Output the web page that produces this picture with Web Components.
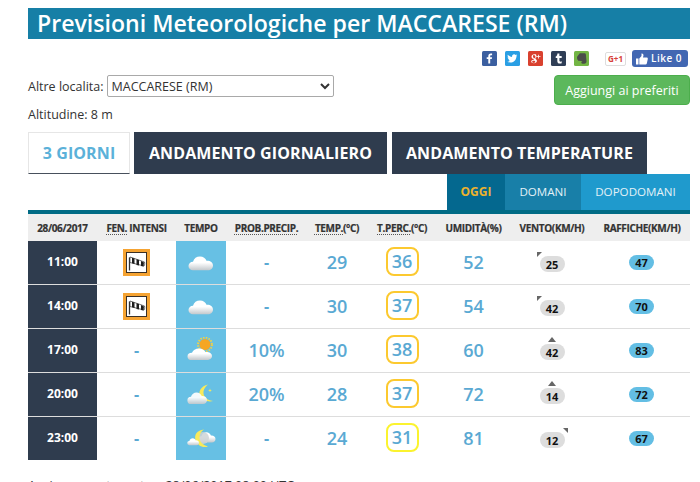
<!DOCTYPE html>
<html lang="it">
<head>
<meta charset="utf-8">
<title>Previsioni Meteorologiche</title>
<style>
html, body { margin: 0; background: #fff; overflow: hidden; }
body { font: 13px "Open Sans", "Liberation Sans", sans-serif; color: #333; }
</style>
</head>
<body>
<meteo-page>
  <meteo-title slot="title">Previsioni Meteorologiche per MACCARESE (RM)</meteo-title>
  <social-bar slot="social"></social-bar>
  <place-form slot="form"></place-form>
  <main-tabs slot="tabs"></main-tabs>
  <day-tabs slot="days"></day-tabs>
  <forecast-table slot="table"></forecast-table>
  <span slot="footer">Aggiornamento meteo: 28/06/2017 08:00 UTC</span>
</meteo-page>

<script>
class MeteoPage extends HTMLElement {
  constructor() {
    super()
    this.attachShadow({ mode: 'open' }).innerHTML = `
<style>
:host { display: block; padding: 8px 10px 0 28px; }
.footer { margin-top: 16px; font-size: 12.5px; line-height: 19px; color: #333; }
</style>
<slot name="title"></slot>
<slot name="social"></slot>
<slot name="form"></slot>
<slot name="tabs"></slot>
<slot name="days"></slot>
<slot name="table"></slot>
<div class="footer"><slot name="footer"></slot></div>`
  }
}

class MeteoTitle extends HTMLElement {
  constructor() {
    super()
    this.attachShadow({ mode: 'open' }).innerHTML = `
<style>
:host { display: block; height: 31px; padding-left: 9px; background: #167fa6; color: #fff;
  font: 600 23.1px/30px "Open Sans", sans-serif; white-space: nowrap; }
</style>
<slot></slot>`
  }
}

class SocialBar extends HTMLElement {
  constructor() {
    super()
    this.attachShadow({ mode: 'open' }).innerHTML = `
<style>
:host { display: flex; align-items: center; justify-content: flex-end; height: 17px;
  margin-top: 11px; padding-right: 2px; }
svg { display: block; width: 15px; height: 15px; margin-right: 8px; }
svg.last { margin-right: 16px; }
.gplus { width: 21px; height: 14px; box-sizing: border-box; border: 1px solid #ddd; border-radius: 2px;
  margin-right: 6px; color: #d8413a; font: 700 8px/12px "Open Sans", sans-serif; text-align: center; }
.like { display: flex; align-items: center; gap: 3px; width: 56px; height: 17px; box-sizing: border-box;
  padding-left: 4px; background: #4267b2; border-radius: 3px; color: #fff;
  font: 600 10px/17px "Open Sans", sans-serif; letter-spacing: .5px; }
.like svg { width: 12px; height: 12px; margin: 0; }
</style>
<svg viewBox="0 0 15 15"><rect width="15" height="15" rx="1.5" fill="#3b5fa0"/><path d="M8.2 12.5V8h1.6l.3-1.8H8.2V5.1c0-.6.2-.9.9-.9h1V2.6C9.7 2.5 9.300 2.500 8.800 2.500c-1.500 0-2.500.9-2.500 2.400v1.300H4.700V8h1.600v4.500z" fill="#fff"/></svg>
<svg viewBox="0 0 15 15"><rect width="15" height="15" rx="1.500" fill="#2a9fe4"/><path d="M12.300 4.400c-.4.2-.8.3-1.200.3.400-.3.800-.7.900-1.200-.4.200-.9.400-1.300.5a2.100 2.100 0 0 0-3.600 1.900C5.400 5.800 3.900 5 2.900 3.700c-.6 1-.3 2.200.6 2.800-.3 0-.6-.1-.9-.2 0 1 .7 1.900 1.700 2.100-.3.100-.6.100-.9 0 .3.800 1 1.400 1.900 1.400-.9.700-2 1-3.100.9 3.100 2 8.900.9 9.300-5.400.3-.2.600-.5.800-.9z" fill="#fff"/></svg>
<svg viewBox="0 0 15 15"><rect width="15" height="15" rx="1.500" fill="#d9412f"/><path d="M6.300 3.200H8.500l-.7.500c.5.400.8.900.8 1.500 0 1.300-1.200 1.700-1.200 2.300 0 .6 1.500 1 1.500 2.500 0 1.200-1.100 2.200-3 2.200-1.500 0-2.700-.6-2.700-1.700s1.200-1.800 2.700-1.800c-.3-.3-.3-.6-.2-.9C4.500 7.900 3.500 7 3.500 5.700c0-1.400 1.200-2.500 2.800-2.500zm-.3.700c-.8 0-1.100.7-1 1.600.1.900.7 1.700 1.400 1.700s1.100-.6 1-1.500c-.1-1-.7-1.800-1.400-1.800zm-.2 5.800c-1 0-1.700.5-1.700 1.100 0 .7.700 1.100 1.600 1.100 1 0 1.600-.4 1.600-1.100 0-.6-.6-1-1.500-1.100zM11 3.800v1.500h1.500v.8H11v1.500h-.8V6.100H8.700v-.8h1.500V3.800z" fill="#fff"/></svg>
<svg viewBox="0 0 15 15"><rect width="15" height="15" rx="1.500" fill="#2f3e56"/><path d="M6.400 2.500h2v2.600h2.300v2H8.400v2.500c0 .8.400 1.100 1 1.100.4 0 .8-.1 1.300-.4v1.900c-.6.300-1.200.4-1.900.4-1.600 0-2.500-1-2.500-2.600V7.100H4.700V5.500c1-.3 1.600-1.300 1.700-3z" fill="#fff"/></svg>
<svg class="last" viewBox="0 0 15 15"><rect width="15" height="15" rx="1.500" fill="#73b544"/><path d="M4 4.500 5.800 2.200h4.600c.8 0 1.400.5 1.500 1.300l.6 6.500c.1 1.700-.8 2.800-2.300 2.800H8.500c-.8 0-1.200-.5-1.200-1.200 0-.9.800-1.200 1.500-1.200l-3-.6C4.500 10.200 3 9 3 6.500c0-.8.300-1.500 1-2z" fill="#4a4d48"/></svg>
<div class="gplus">G+1</div>
<div class="like"><svg viewBox="0 0 12 12"><path d="M0 5.500h2.500V11.500H0zM3.300 5.500 5.500 3V.5c1.200-.3 2 .7 2 1.800L7 4.500h3.600c.9 0 1.400.7 1.200 1.500l-1 4.500c-.2.700-.6 1-1.300 1H3.300z" fill="#fff"/></svg><span>Like 0</span></div>`
  }
}

class PlaceForm extends HTMLElement {
  constructor() {
    super()
    this.attachShadow({ mode: 'open' }).innerHTML = `
<style>
:host { display: flex; justify-content: space-between; align-items: flex-start; height: 57px;
  margin-top: 8px; font: 12.5px "Open Sans", sans-serif; color: #333; }
.line { display: flex; align-items: center; gap: 3px; height: 22px; }
select { width: 227px; height: 22px; margin: 0; padding: 0; box-sizing: border-box; background: #fff;
  border: 1px solid #a9a9a9; border-radius: 2px; font: 12.5px "Open Sans", sans-serif; color: #333; }
.alt { margin-top: 9px; line-height: 18px; }
button { width: 136px; height: 30px; padding: 0; border: 1px solid #4cae4c; border-radius: 4px;
  background: #5cb85c; color: #fff; font: 12.5px "Open Sans", sans-serif; }
</style>
<div>
  <div class="line"><label>Altre localita:</label><select><option>MACCARESE (RM)</option></select></div>
  <div class="alt">Altitudine: 8 m</div>
</div>
<button>Aggiungi ai preferiti</button>`
  }
}

class MainTabs extends HTMLElement {
  constructor() {
    super()
    this.attachShadow({ mode: 'open' }).innerHTML = `
<style>
:host { display: flex; gap: 4px; height: 42px; font: 700 16px/42px "Open Sans", sans-serif; white-space: nowrap;
  letter-spacing: .1px; }
div { background: #2f3c4e; color: #fff; text-align: center; }
.t2 { width: 253px; }
.t3 { width: 255px; margin-left: 1px; }
.on { width: 102px; box-sizing: border-box; line-height: 40px; background: #fff; color: #5bb1d9;
  border: 1px solid #e6e6e6; border-bottom: 1px solid #47505c; }
</style>
<div class="on">3 GIORNI</div>
<div class="t2">ANDAMENTO GIORNALIERO</div>
<div class="t3">ANDAMENTO TEMPERATURE</div>`
  }
}

class DayTabs extends HTMLElement {
  constructor() {
    super()
    this.attachShadow({ mode: 'open' }).innerHTML = `
<style>
:host { display: flex; justify-content: flex-end; height: 36px; font: 11.6px/36px "Open Sans", sans-serif;
  color: #e3f1f7; text-align: center; }
.oggi { width: 58px; background: #04688f; color: #ecb22e; font-weight: 700; font-size: 12px; }
.dom { width: 76px; background: #187fa8; }
.dop { width: 109px; background: #1f9acd; }
</style>
<div class="oggi">OGGI</div><div class="dom">DOMANI</div><div class="dop">DOPODOMANI</div>`
  }
}

// icone meteo, disegnate sullo sfondo azzurro della colonna TEMPO
const cloud = (x, y, sx, sy = sx) => `<g transform="translate(${x} ${y}) scale(${sx} ${sy})">
  <path d="M5 15a4.500 4.500 0 0 1 0-9c1-3.500 3.500-5.500 7-5.500 3.200 0 5.500 2 6.500 4.500 3.200-.5 6.500 1.500 6.500 5 0 3-2.300 5-5 5z" fill="url(#cl)"/></g>`
const ICONS = {
  cloud: cloud(3, 7, 1, .95),
  sun: `<circle cx="20" cy="7.500" r="5.500" fill="#f5a623"/><circle cx="20" cy="7.500" r="7" fill="none" stroke="#f7d23e" stroke-width="1.800" stroke-dasharray="1.500 1.300"/>` + cloud(2, 11, 1, .8),
  moon: `<path d="M23 3.500C16 5 13 11 15 15c2 4 8 6.500 13 5C21 19 18 15 18.500 10.500 19 7.500 21 5 23 3.500z" fill="#f8ea5a"/><path d="M25 7.500l.5 1.400 1.400.5-1.400.5-.5 1.400-.5-1.400-1.400-.5 1.400-.5z" fill="#f8ea5a"/><g opacity=".92">` + cloud(2, 11, .8) + `</g>`,
  moonCloud: cloud(13, 7, .7) + `<circle cx="18" cy="13" r="6" fill="#cfd3d6" opacity=".85"/><path d="M19 4.500C12 5 9 10 10.500 15c1.500 5 7 8.500 12.500 6.500C17.500 20 14.500 16.500 14.500 12.500 14.500 9 16 6.500 19 4.500z" fill="#f8ea5a"/>` + cloud(2, 13, .48)
}

const windsock = `<svg viewBox="0 0 27 27" width="27" height="27">
  <rect x="1.500" y="1.500" width="24" height="24" fill="#fff" stroke="#f5a332" stroke-width="3"/>
  <rect x="3.500" y="3.500" width="20" height="20" fill="#fff" stroke="#3a3026" stroke-width="1"/>
  <path d="M6.500 8.500v13" stroke="#333" stroke-width="1.300" fill="none"/>
  <path d="M7 8 21.500 13c.5 1.500.2 3-.5 4L7 13.500z" fill="#fff" stroke="#333" stroke-width=".7"/>
  <path d="M9 8.700v5.500l2.500.8V9.500zM13.500 10.200v5.800l2.500.6v-5.500zM18 11.900v5.200l2.500.3.500-3.800z" fill="#1c1c1c"/>
</svg>`

const COLS = '69px 79px 50px 81px 60px 70px 73px 84px 96px'

class ForecastTable extends HTMLElement {
  constructor() {
    super()
    const rows = [
      { ora: '11:00', fen: true, tempo: 'cloud', prob: '-', temp: 29, perc: 36, um: 52, vento: 25, dir: 'nw', raf: 47 },
      { ora: '14:00', fen: true, tempo: 'cloud', prob: '-', temp: 30, perc: 37, um: 54, vento: 42, dir: 'nw', raf: 70 },
      { ora: '17:00', fen: false, tempo: 'sun', prob: '10%', temp: 30, perc: 38, um: 60, vento: 42, dir: 'n', raf: 83 },
      { ora: '20:00', fen: false, tempo: 'moon', prob: '20%', temp: 28, perc: 37, um: 72, vento: 14, dir: 'n', raf: 72 },
      { ora: '23:00', fen: false, tempo: 'moonCloud', prob: '-', temp: 24, perc: 31, um: 81, vento: 12, dir: 'ne', raf: 67, low: true }
    ]
    this.attachShadow({ mode: 'open' }).innerHTML = `
<style>
:host { display: block; border-top: 4px solid #006b85; }
.head, .row { display: grid; grid-template-columns: ${COLS}; text-align: center; }
.head { height: 27px; align-items: center; background: #eee; font: 700 10px/1 "Open Sans", sans-serif; color: #333;
  letter-spacing: -.35px; white-space: nowrap; -webkit-text-stroke: .2px #333; }
u { text-decoration: underline dotted #555; text-underline-offset: 2px; }
.row { height: 43px; border-bottom: 1px solid #ddd; align-items: stretch; }
.row:last-of-type { border-bottom: 0; }
.row > div { display: flex; align-items: center; justify-content: center; }
.row > .up { padding-bottom: 2px; }
.ora { background: #2f3c4e; color: #fff; font: 700 12px "Open Sans", sans-serif; }
.tempo { background: #67c0e4; }
.val { color: #5aa9d3; font: 600 18px "Open Sans", sans-serif; }
.dash { color: #5aa9d3; font: 700 16px "Open Sans", sans-serif; }
.box { display: block; width: 33px; height: 29px; box-sizing: border-box; border: 2px solid #fcc92f; border-radius: 8px;
  line-height: 25px; }
.box.low { border-color: #fbf32f; }
.wind { position: relative; width: 25px; height: 16px; margin-top: 3px; border-radius: 8px; background: #ddd;
  color: #111; font: 700 11px/17px "Open Sans", sans-serif; }
.wind i { position: absolute; width: 0; height: 0; }
.wind.nw i { left: -3px; top: -4px; border-top: 5px solid #666; border-right: 5px solid transparent; }
.wind.n i { left: 8px; top: -7px; border-bottom: 5px solid #666; border-left: 4px solid transparent; border-right: 4px solid transparent; }
.wind.ne i { right: -3px; top: -4px; border-top: 5px solid #666; border-left: 5px solid transparent; }
.raf { width: 25px; height: 15px; margin-right: 1px; border-radius: 8px; background: #63bee4; color: #111;
  font: 700 11px/15px "Open Sans", sans-serif; }
</style>
<svg width="0" height="0" style="position:absolute"><defs>
  <linearGradient id="cl" x1="0" y1="0" x2="0" y2="1"><stop offset=".45" stop-color="#fff"/><stop offset="1" stop-color="#c3c8cc"/></linearGradient>
</defs></svg>
<div class="head">
  <span>28/06/2017</span><span><u>FEN.</u> INTENSI</span><span>TEMPO</span><span><u>PROB.PRECIP.</u></span>
  <span><u>TEMP.</u>(°C)</span><span><u>T.PERC.</u>(°C)</span><span>UMIDITÀ(%)</span><span>VENTO(KM/H)</span><span>RAFFICHE(KM/H)</span>
</div>
${rows.map(r => `<div class="row">
  <div class="ora up">${r.ora}</div>
  <div class="${r.fen ? '' : 'up'}">${r.fen ? windsock : '<span class="dash">-</span>'}</div>
  <div class="tempo"><svg viewBox="0 0 32 28" width="32" height="28">${ICONS[r.tempo]}</svg></div>
  <div class="${r.prob === '-' ? 'dash' : 'val'} up">${r.prob}</div>
  <div class="val up">${r.temp}</div>
  <div class="val up"><span class="box${r.low ? ' low' : ''}">${r.perc}</span></div>
  <div class="val up">${r.um}</div>
  <div><span class="wind ${r.dir}"><i></i>${r.vento}</span></div>
  <div><span class="raf">${r.raf}</span></div>
</div>`).join('')}`
  }
}

customElements.define('meteo-page', MeteoPage)
customElements.define('meteo-title', MeteoTitle)
customElements.define('social-bar', SocialBar)
customElements.define('place-form', PlaceForm)
customElements.define('main-tabs', MainTabs)
customElements.define('day-tabs', DayTabs)
customElements.define('forecast-table', ForecastTable)
</script>
</body>
</html>
